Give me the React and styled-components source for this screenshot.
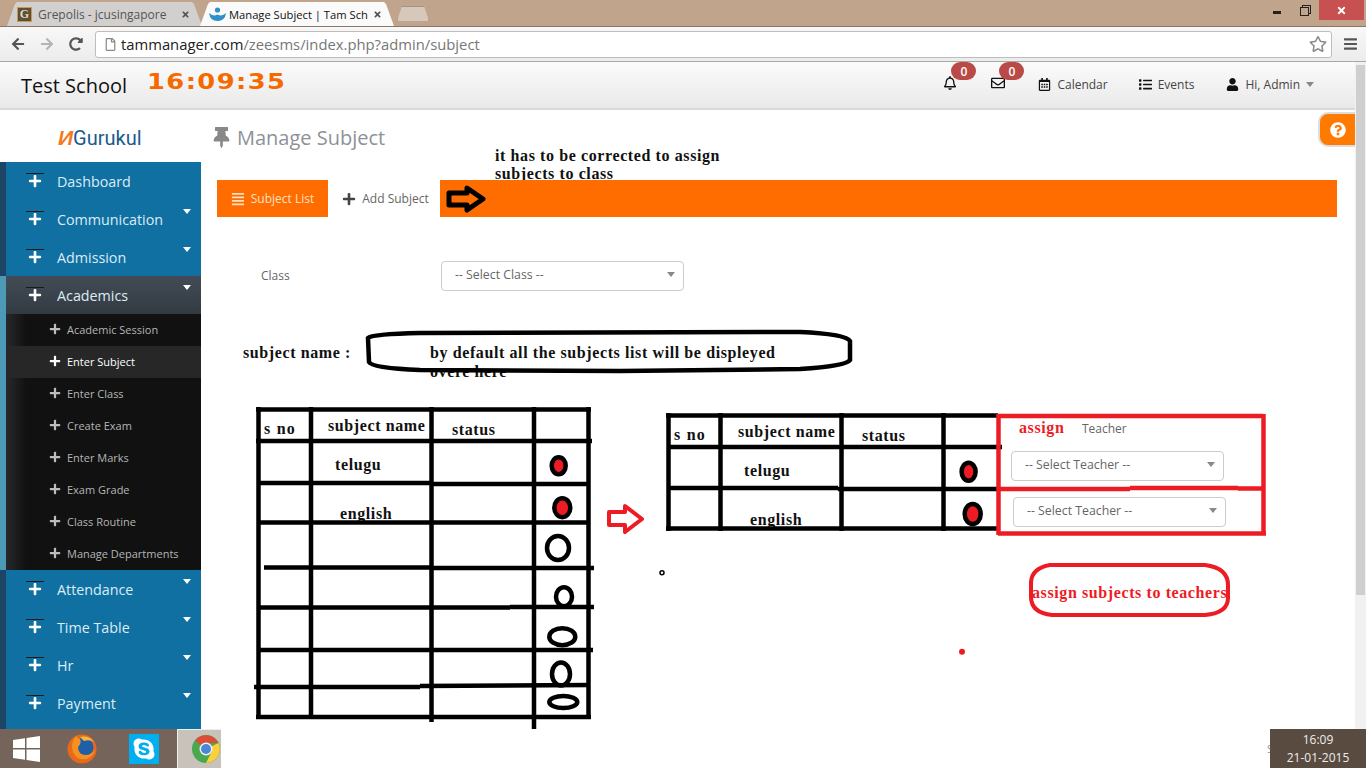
import React from 'react';
import styled, { createGlobalStyle } from 'styled-components';
import {
  FaAlignJustify,
  FaPlus,
  FaRegBell,
  FaRegEnvelope,
  FaRegCalendarAlt,
  FaList,
  FaUser,
  FaQuestionCircle,
  FaThumbtack,
  FaSkype,
  FaArrowLeft,
  FaArrowRight,
  FaRedoAlt,
  FaRegStar,
  FaRegFile,
  FaTimes,
  FaBars,
} from 'react-icons/fa';

const GlobalStyle = createGlobalStyle`
  html, body {
    margin: 0;
    padding: 0;
    background: #fff;
    overflow: hidden;
  }
  * {
    box-sizing: border-box;
  }
`;

const Screen = styled.div`
  position: relative;
  width: 1366px;
  height: 768px;
  overflow: hidden;
  display: flex;
  flex-direction: column;
  font-family: 'Open Sans', 'Liberation Sans', sans-serif;
  background: #fff;
`;

/* browser frame */
const TabStrip = styled.div`
  height: 26px;
  flex: none;
  display: flex;
  align-items: flex-end;
  padding-left: 7px;
  background: #c1a48c;
  position: relative;
`;

const Tab = styled.div`
  width: ${({ $active }) => ($active ? '194px' : '195px')};
  height: 24px;
  margin-right: ${({ $active }) => ($active ? '3px' : '-2px')};
  padding: 0 12px 0 ${({ $active }) => ($active ? '9px' : '10px')};
  display: flex;
  align-items: center;
  gap: ${({ $active }) => ($active ? '3px' : '6px')};
  font-size: ${({ $active }) => ($active ? '11.2px' : '12px')};
  color: ${({ $active }) => ($active ? '#111' : '#555')};
  background: ${({ $active }) => ($active ? '#fafafa' : '#d2d0ce')};
  clip-path: polygon(0 100%, 8px 2px, 10px 0, calc(100% - 10px) 0, calc(100% - 8px) 2px, 100% 100%);
  position: relative;
  z-index: ${({ $active }) => ($active ? 1 : 0)};
`;

const TabTitle = styled.span`
  flex: 1;
  overflow: hidden;
  white-space: nowrap;
`;

const TabClose = styled(FaTimes)`
  font-size: 9px;
  color: #555;
  flex: none;
`;

const FavG = styled.span`
  width: 15px;
  height: 15px;
  flex: none;
  display: flex;
  align-items: center;
  justify-content: center;
  background: #5a5040;
  border: 1px solid #c79a4c;
  color: #e8d9b0;
  font: bold 12px 'Liberation Serif', serif;
`;

const NewTab = styled.div`
  width: 32px;
  height: 15px;
  margin: 0 0 5px 0;
  background: #d6c8bb;
  border: 1px solid #a8927f;
  border-bottom: 0;
  clip-path: polygon(0 100%, 5px 0, calc(100% - 5px) 0, 100% 100%);
`;

const WindowControls = styled.div`
  position: absolute;
  top: 0;
  right: 2px;
  display: flex;
  align-items: flex-start;
`;

const MinButton = styled.div`
  width: 8px;
  height: 3px;
  margin: 11px 19px 0 0;
  background: #222;
`;

const RestoreButton = styled.div`
  width: 9px;
  height: 9px;
  margin: 7px 10px 0 0;
  border: 1px solid #222;
  box-shadow: 2px -2px 0 -1px #c1a48c, 2px -2px 0 0 #222;
`;

const CloseButton = styled.div`
  width: 45px;
  height: 20px;
  background: #c75050;
  color: #fff;
  display: flex;
  align-items: center;
  justify-content: center;
  font-size: 11px;
`;

const Toolbar = styled.div`
  height: 36px;
  flex: none;
  display: flex;
  align-items: center;
  padding: 0 9px 0 11px;
  background: linear-gradient(#f8f8f8, #ececec);
  border-top: 1px solid #8c7766;
  border-bottom: 1px solid #a8a8a8;
`;

const NavIcon = styled.span`
  width: ${({ $w }) => $w}px;
  flex: none;
  display: flex;
  font-size: 14px;
  color: ${({ $muted }) => ($muted ? '#b4b4b4' : '#555')};
`;

const UrlBox = styled.div`
  width: 1237px;
  height: 27px;
  flex: none;
  display: flex;
  align-items: center;
  gap: 4px;
  padding: 0 4px 0 8px;
  background: #fff;
  border: 1px solid #bdbdbd;
  border-radius: 3px;
  font-size: 14.8px;
  color: #777;
`;

const UrlHost = styled.span`
  color: #222;
`;

const UrlText = styled.div`
  flex: 1;
  white-space: nowrap;
`;

const StarIcon = styled(FaRegStar)`
  font-size: 18px;
  color: #8a8a8a;
`;

const MenuIcon = styled(FaBars)`
  margin-left: 12px;
  font-size: 16px;
  color: #555;
`;

/* page */
const PageRow = styled.div`
  flex: 1;
  min-height: 0;
  display: flex;
`;

const PageColumn = styled.div`
  flex: 1;
  min-width: 0;
  display: flex;
  flex-direction: column;
`;

const Scrollbar = styled.div`
  width: 11px;
  flex: none;
  padding: 3px 1px 0;
  background: #f1f1f1;
`;

const ScrollThumb = styled.div`
  height: 530px;
  background: #cfcfcf;
`;

const Header = styled.header`
  height: 48px;
  flex: none;
  display: flex;
  align-items: center;
  padding: 0 41px 0 21px;
  background: linear-gradient(#fbfbfb, #e9e9e9);
  border-bottom: 2px solid #dadada;
`;

const SchoolName = styled.div`
  width: 126px;
  font-size: 20px;
  color: #111;
`;

const Clock = styled.div`
  flex: 1;
  margin-bottom: 8px;
  font: bold 22px 'DejaVu Sans', sans-serif;
  letter-spacing: 1.2px;
  color: #f56a00;
  transform: scaleX(1.17);
  transform-origin: left center;
`;

const AlertIcon = styled.div`
  position: relative;
  width: ${({ $w }) => $w}px;
  display: flex;
  margin-bottom: 4px;
  font-size: 14px;
  color: #111;
`;

const Badge = styled.span`
  position: absolute;
  top: -14px;
  left: 8px;
  width: 25px;
  height: 18px;
  border-radius: 9px;
  background: #b94a48;
  color: #fff;
  font-size: 12px;
  font-weight: 600;
  display: flex;
  align-items: center;
  justify-content: center;
`;

const HeaderLink = styled.div`
  display: flex;
  align-items: center;
  gap: 6px;
  margin-right: ${({ $gap }) => $gap}px;
  padding-bottom: 2px;
  font-size: 12px;
  color: #444;
  svg {
    color: #111;
    font-size: 13px;
  }
`;

const Caret = styled.span`
  width: 0;
  height: 0;
  border-left: 4px solid transparent;
  border-right: 4px solid transparent;
  border-top: ${({ $h }) => $h || 5}px solid ${({ $color }) => $color || '#888'};
`;

const Body = styled.div`
  flex: 1;
  min-height: 0;
  display: flex;
`;

const Sidebar = styled.aside`
  width: 201px;
  flex: none;
  overflow: hidden;
  background: #1170a2;
  border-left: 0;
`;

const Logo = styled.div`
  height: 52px;
  display: flex;
  align-items: center;
  padding: 4px 0 0 58px;
  background: #fff;
  font: 20px Roboto, 'Liberation Sans', sans-serif;
  color: #1b5b8c;
`;

const LogoMark = styled.span`
  font: italic 900 21px 'Liberation Sans', sans-serif;
  color: #f47a20;
`;

const MenuItem = styled.div`
  height: 38px;
  display: flex;
  align-items: center;
  border-left: 6px solid ${({ $open }) => ($open ? '#4c9ab5' : '#1d4566')};
  background: ${({ $open }) => ($open ? 'linear-gradient(#434c56, #323a42)' : '#1170a2')};
  padding-left: 22px;
  font-size: 14.3px;
  color: #dcecf5;
  position: relative;
`;

const MenuPlus = styled.span`
  width: 14px;
  margin-right: 15px;
  display: flex;
  color: #fff;
  font-size: 14px;
  position: relative;
  &::before {
    content: '';
    position: absolute;
    top: -1px;
    left: -2px;
    width: 18px;
    height: 1px;
    background: #1a1a1a;
  }
`;

const MenuCaret = styled.span`
  position: absolute;
  right: 10px;
  top: 9px;
  width: 0;
  height: 0;
  border-left: 4.5px solid transparent;
  border-right: 4.5px solid transparent;
  border-top: 5px solid #fff;
`;

const SubMenu = styled.div`
  background: #111;
`;

const SubItem = styled.div`
  height: 32px;
  display: flex;
  align-items: center;
  gap: 6px;
  padding: 0 0 2px 43px;
  border-left: 6px solid #4c9ab5;
  font-size: 11px;
  color: ${({ $active }) => ($active ? '#fff' : '#b5b5b5')};
  background: ${({ $active }) =>
    $active ? '#272727' : 'linear-gradient(90deg, #26292c, #111 20px)'};
  svg {
    font-size: 12px;
    color: ${({ $active }) => ($active ? '#fff' : '#bdbdbd')};
  }
`;

const SidebarTail = styled.div`
  height: 7px;
  border-left: 6px solid #1d4566;
`;

const Main = styled.main`
  flex: 1;
  min-width: 0;
  padding: 0 18px 0 16px;
`;

const TitleRow = styled.div`
  height: 70px;
  display: flex;
  align-items: flex-start;
  gap: 5px;
  padding-top: 14px;
  font-size: 20px;
  color: #8d9298;
  svg {
    color: #888;
    font-size: 21px;
    margin: 3px 0 0 -6px;
  }
`;

const TabsBar = styled.div`
  position: relative;
  z-index: 2;
  height: 37px;
  display: flex;
  background: #fff;
`;

const TabButton = styled.div`
  width: ${({ $w }) => $w}px;
  flex: none;
  display: flex;
  align-items: center;
  justify-content: center;
  gap: 6px;
  padding-left: ${({ $active }) => ($active ? 0 : 3)}px;
  font-size: 12px;
  color: ${({ $active }) => ($active ? '#fde0c4' : '#666')};
  background: ${({ $active }) => ($active ? '#ff6c00' : '#fff')};
  svg {
    font-size: 14px;
    color: ${({ $active }) => ($active ? '#fde0c4' : '#444')};
  }
`;

const TabsFill = styled.div`
  flex: 1;
  display: flex;
  align-items: center;
  padding-left: 6px;
  background: #ff6c00;
`;

const FormRow = styled.div`
  display: flex;
  align-items: center;
  margin: 44px 0 0 44px;
  font-size: 12px;
  color: #666;
`;

const FormLabel = styled.label`
  width: 180px;
  padding-bottom: 2px;
`;

const SelectBox = styled.div`
  width: ${({ $w }) => $w}px;
  height: 30px;
  display: flex;
  align-items: center;
  justify-content: space-between;
  padding: 0 8px 3px 13px;
  background: #fff;
  border: 1px solid #ccc;
  border-radius: 4px;
  font-size: 12.3px;
  color: #666;
`;

const CanvasSelect = styled(SelectBox)`
  position: absolute;
  z-index: 2;
  left: ${({ $x }) => $x}px;
  top: ${({ $y }) => $y}px;
`;

const CanvasLabel = styled.span`
  position: absolute;
  z-index: 2;
  left: 1082px;
  top: 420px;
  font-size: 12px;
  color: #666;
`;

const HelpTab = styled.div`
  position: absolute;
  z-index: 3;
  top: 112px;
  left: 1318px;
  width: 37px;
  height: 35px;
  display: flex;
  align-items: center;
  padding-left: 10px;
  background: #ff7a00;
  border: 2px solid #ddd;
  border-right: 0;
  border-radius: 10px 0 0 10px;
  color: #fff;
  font-size: 16px;
`;

/* hand drawn notes */
const SketchLayer = styled.svg`
  position: absolute;
  z-index: 1;
  left: 0;
  top: 0;
  pointer-events: none;
`;

const Scribble = styled.text`
  font: bold 16px 'Liberation Serif', serif;
  letter-spacing: ${({ $spacing }) => $spacing || 0.6}px;
  fill: ${({ $red }) => ($red ? '#ed1c24' : '#111')};
`;

/* taskbar */
const Taskbar = styled.footer`
  height: 39px;
  flex: none;
  display: flex;
  justify-content: space-between;
  background: #fff;
`;

const TaskbarStart = styled.div`
  width: 221px;
  display: flex;
  align-items: center;
  padding-left: 13px;
  background: #75645a;
`;

const TaskIcon = styled.span`
  width: ${({ $w }) => $w}px;
  flex: none;
  display: flex;
`;

const SkypeTile = styled.span`
  width: 30px;
  height: 30px;
  display: flex;
  align-items: center;
  justify-content: center;
  background: #00aff0;
  color: #fff;
  font-size: 24px;
`;

const TaskActive = styled.span`
  width: 44px;
  height: 39px;
  margin-left: auto;
  display: flex;
  align-items: center;
  justify-content: center;
  padding-left: 12px;
  overflow: hidden;
  background: #c9c2bb;
  border-left: 1px solid #eee;
  border-top: 1px solid #eee;
`;

const SystemClock = styled.div`
  width: 96px;
  position: relative;
  display: flex;
  flex-direction: column;
  align-items: center;
  justify-content: center;
  gap: 3px;
  background: #5a4b40;
  color: #eee;
  font-size: 12px;
  line-height: 15px;
  &::before {
    content: 'S';
    position: absolute;
    left: -3px;
    top: 14px;
    width: 3px;
    overflow: hidden;
    color: #999;
    font-size: 11px;
    line-height: 12px;
  }
`;

const sideTop = ['Dashboard', 'Communication', 'Admission'];
const subItems = [
  'Academic Session',
  'Enter Subject',
  'Enter Class',
  'Create Exam',
  'Enter Marks',
  'Exam Grade',
  'Class Routine',
  'Manage Departments',
];
const sideBottom = ['Attendance', 'Time Table', 'Hr', 'Payment'];

const blackLines = [
  [258.5, 407, 258.5, 719], [311, 407, 311, 719], [431.5, 407, 431.5, 722],
  [534, 407, 534, 729], [588.5, 407, 588.5, 719],
  [256, 409.5, 591, 409.5], [256, 441, 592, 441], [258, 483, 430, 483],
  [430, 484, 590, 484], [258, 522.5, 590, 522.5], [264, 567.5, 430, 567.5],
  [430, 568, 594, 568], [258, 607.5, 510, 607.5], [510, 607, 594, 607],
  [258, 650, 593, 650], [254, 687, 420, 687], [420, 686, 590, 685],
  [256, 717, 591, 717],
  [668.5, 413, 668.5, 531], [720.5, 413, 720.5, 531], [841.5, 413, 841.5, 531],
  [943.5, 413, 943.5, 531], [666, 415.5, 998, 415.5], [668, 447, 1002, 447],
  [668, 488, 838, 488], [838, 489, 998, 489], [666, 528.5, 998, 528.5],
];

const redLines = [
  [998, 416, 1263, 416], [998.5, 414, 998.5, 535], [1263.5, 414, 1263.5, 535],
  [998, 533.5, 1266, 533.5], [1000, 489, 1130, 489], [1130, 488, 1238, 488],
  [1238, 488.5, 1263, 488.5],
];

const rings = [
  [558.7, 465.7, 7, 8.5, '#ed1c24'],
  [562.3, 507.7, 8, 9.5, '#ed1c24'],
  [558, 548, 11, 12, 'none'],
  [564, 596.7, 8, 9.5, 'none'],
  [562.3, 636.7, 13, 8.5, 'none'],
  [561, 674, 9, 11.5, 'none'],
  [563.3, 702, 14, 6, 'none'],
  [968.6, 471.7, 7, 9, '#ed1c24'],
  [972.7, 514, 8, 10, '#ed1c24'],
];

const notes = [
  ['it has to be corrected to assign', 495, 161],
  ['subjects to class', 495, 179],
  ['subject name :', 243, 358],
  ['by default all the subjects list will be displeyed', 430, 358],
  ['overe here', 430, 377],
  ['s no', 264, 434, 1.2],
  ['subject name', 328, 431],
  ['status', 452, 435],
  ['telugu', 335, 470],
  ['english', 340, 519],
  ['s no', 674, 440, 1.2],
  ['subject name', 738, 437],
  ['status', 862, 441],
  ['telugu', 744, 476],
  ['english', 750, 525],
];

const Sketch = () => (
  <SketchLayer width="1366" height="768" viewBox="0 0 1366 768">
    {notes.map(([label, x, y, spacing]) => (
      <Scribble key={`${label}${x}`} x={x} y={y} $spacing={spacing}>{label}</Scribble>
    ))}
    <Scribble x="1019" y="433" $red>assign</Scribble>
    <Scribble x="1032" y="598" $red>assign subjects to teachers</Scribble>
    <path
      d="M368 338 Q372 334 420 333 L800 332 Q846 334 850 341 L850 360 Q846 366 800 369 L620 371 L420 370 Q372 368 369 362 Z"
      fill="none" stroke="#000" strokeWidth="4.5" />
    {blackLines.map(([x1, y1, x2, y2]) => (
      <line key={`${x1}-${y1}-${x2}`} x1={x1} y1={y1} x2={x2} y2={y2} stroke="#000" strokeWidth="4.5" />
    ))}
    {rings.map(([cx, cy, rx, ry, fill]) => (
      <ellipse key={`${cx}-${cy}`} cx={cx} cy={cy} rx={rx} ry={ry} fill={fill} stroke="#000" strokeWidth="4.5" />
    ))}
    {redLines.map(([x1, y1, x2, y2]) => (
      <line key={`${x1}-${y1}-${x2}`} x1={x1} y1={y1} x2={x2} y2={y2} stroke="#ed1c24" strokeWidth="4.5" />
    ))}
    <path d="M1050 565 L1205 565 Q1228 568 1228 585 L1228 598 Q1228 613 1205 615 L1052 615 Q1032 613 1031 598 L1031 582 Q1032 568 1050 565 Z"
      fill="none" stroke="#ed1c24" strokeWidth="4" />
    <path d="M609 512 L625 512 L625 506 L642 519 L625 532 L625 525 L609 525 Z"
      fill="#fff" stroke="#ed1c24" strokeWidth="4" strokeLinejoin="round" />
    <circle cx="662" cy="572.7" r="2" fill="#fff" stroke="#000" strokeWidth="1.5" />
    <circle cx="962" cy="651.7" r="3" fill="#ed1c24" />
  </SketchLayer>
);

const WindowsLogo = () => (
  <svg width="27" height="26" viewBox="0 0 27 26">
    <path d="M0 4 L12 2.2 V12 H0 Z M13.5 2 L27 0 V12 H13.5 Z M0 13.5 H12 V23.8 L0 22 Z M13.5 13.5 H27 V26 L13.5 24 Z" fill="#fff" />
  </svg>
);

const FirefoxLogo = () => (
  <svg width="30" height="30" viewBox="0 0 30 30">
    <circle cx="15" cy="15" r="14.5" fill="#e8691c" />
    <circle cx="17" cy="13" r="9.5" fill="#1e5fa8" />
    <path d="M9 2 Q3 9 6 18 Q10 27 20 25 Q27 22 28 15 Q25 21 18 21 Q11 20 11 13 Q15 9 13 5 Q11 5 9 2 Z" fill="#f3921f" />
    <path d="M13 3 Q22 1 27 8 Q22 5 17 7 Z" fill="#f6b73c" />
  </svg>
);

const ChromeLogo = ({ size = 28 }) => (
  <svg width={size} height={size} viewBox="0 0 28 28" style={{ flex: 'none' }}>
    <circle cx="14" cy="14" r="14" fill="#4aa94e" />
    <path d="M14 14 L3 5.5 A14 14 0 0 1 26.5 8 H14 Z" fill="#dd4b39" />
    <path d="M14 14 L26.5 8 A14 14 0 0 1 14 28 L20 16 Z" fill="#fcd03a" />
    <circle cx="14" cy="14" r="6.5" fill="#f1f1f1" />
    <circle cx="14" cy="14" r="5" fill="#4a87d6" />
  </svg>
);

const SchoolFavicon = () => (
  <svg width="17" height="14" viewBox="0 0 17 14" style={{ flex: 'none' }}>
    <circle cx="8.5" cy="3" r="2.6" fill="#2f8fcb" />
    <path d="M0 6 Q4 10 8.5 7.5 Q13 10 17 6 Q16 14 8.5 14 Q1 14 0 6 Z" fill="#2f8fcb" />
  </svg>
);

const MainMenu = ({ label, caret, open }) => (
  <MenuItem $open={open}>
    <MenuPlus><FaPlus /></MenuPlus>
    {label}
    {caret && <MenuCaret />}
  </MenuItem>
);

const App = () => (
  <Screen>
    <GlobalStyle />
    <TabStrip>
      <Tab>
        <FavG>G</FavG>
        <TabTitle>Grepolis - jcusingapore</TabTitle>
        <TabClose />
      </Tab>
      <Tab $active>
        <SchoolFavicon />
        <TabTitle>Manage Subject | Tam Sch</TabTitle>
        <TabClose />
      </Tab>
      <NewTab />
      <WindowControls>
        <MinButton />
        <RestoreButton />
        <CloseButton><FaTimes /></CloseButton>
      </WindowControls>
    </TabStrip>
    <Toolbar>
      <NavIcon $w={29}><FaArrowLeft /></NavIcon>
      <NavIcon $w={29} $muted><FaArrowRight /></NavIcon>
      <NavIcon $w={26}><FaRedoAlt /></NavIcon>
      <UrlBox>
        <FaRegFile size={13} color="#888" />
        <UrlText><UrlHost>tammanager.com</UrlHost>/zeesms/index.php?admin/subject</UrlText>
        <StarIcon />
      </UrlBox>
      <MenuIcon />
    </Toolbar>
    <PageRow>
      <PageColumn>
        <Header>
          <SchoolName>Test School</SchoolName>
          <Clock>16:09:35</Clock>
          <AlertIcon $w={48}><FaRegBell /><Badge>0</Badge></AlertIcon>
          <AlertIcon $w={47}><FaRegEnvelope /><Badge>0</Badge></AlertIcon>
          <HeaderLink $gap={31}><FaRegCalendarAlt />Calendar</HeaderLink>
          <HeaderLink $gap={32}><FaList />Events</HeaderLink>
          <HeaderLink $gap={0}><FaUser />Hi, Admin<Caret /></HeaderLink>
        </Header>
        <Body>
          <Sidebar>
            <Logo><LogoMark>И</LogoMark>Gurukul</Logo>
            {sideTop.map((label, i) => (
              <MainMenu key={label} label={label} caret={i > 0} />
            ))}
            <MainMenu label="Academics" caret open />
            <SubMenu>
              {subItems.map((label) => (
                <SubItem key={label} $active={label === 'Enter Subject'}>
                  <FaPlus />
                  {label}
                </SubItem>
              ))}
            </SubMenu>
            {sideBottom.map((label) => (
              <MainMenu key={label} label={label} caret />
            ))}
            <SidebarTail />
          </Sidebar>
          <Main>
            <TitleRow><FaThumbtack />Manage Subject</TitleRow>
            <TabsBar>
              <TabButton $w={111} $active><FaAlignJustify />Subject List</TabButton>
              <TabButton $w={112}><FaPlus />Add Subject</TabButton>
              <TabsFill>
                <svg width="40" height="28" viewBox="0 0 40 28">
                  <path d="M3 8 L21 8 L21 3 L37 14 L21 25 L21 20 L3 20 Z" fill="#ff6c00" stroke="#000" strokeWidth="5" strokeLinejoin="round" />
                </svg>
              </TabsFill>
            </TabsBar>
            <FormRow>
              <FormLabel>Class</FormLabel>
              <SelectBox $w={243}>-- Select Class --<Caret $h={5} /></SelectBox>
            </FormRow>
          </Main>
        </Body>
      </PageColumn>
      <Scrollbar><ScrollThumb /></Scrollbar>
    </PageRow>
    <Taskbar>
      <TaskbarStart>
        <TaskIcon $w={54}><WindowsLogo /></TaskIcon>
        <TaskIcon $w={62}><FirefoxLogo /></TaskIcon>
        <SkypeTile><FaSkype /></SkypeTile>
        <TaskActive><ChromeLogo /></TaskActive>
      </TaskbarStart>
      <SystemClock>
        <span>16:09</span>
        <span>21-01-2015</span>
      </SystemClock>
    </Taskbar>
    <Sketch />
    <CanvasLabel>Teacher</CanvasLabel>
    <CanvasSelect $w={213} $x={1011} $y={451}>-- Select Teacher --<Caret $h={5} /></CanvasSelect>
    <CanvasSelect $w={213} $x={1013} $y={497}>-- Select Teacher --<Caret $h={5} /></CanvasSelect>
    <HelpTab><FaQuestionCircle /></HelpTab>
  </Screen>
);

export default App;
